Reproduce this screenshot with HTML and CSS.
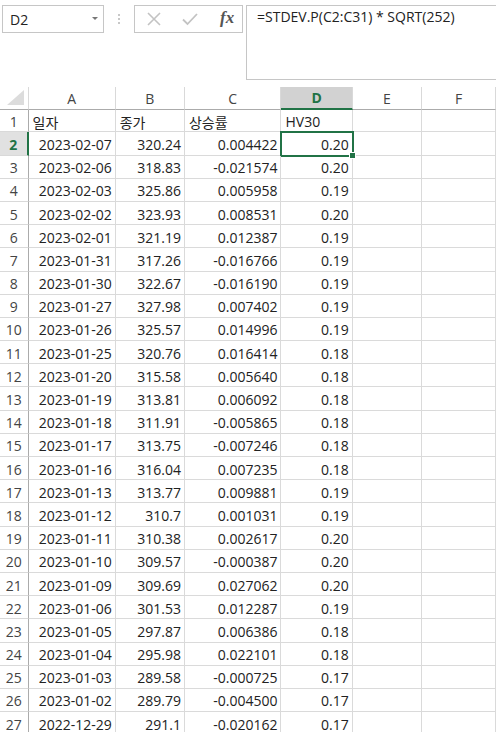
FILE: index.html
```html
<!DOCTYPE html>
<html>
<head>
<meta charset="utf-8">
<link rel="stylesheet" href="styles.css">
</head>
<body>
<div class="app">
  <div class="formula-area">
    <div class="namebox"><span class="name">D2</span><span class="caret"></span></div>
    <div class="dots"><i></i><i></i><i></i></div>
    <div class="fxbox">
      <svg class="ico-x" width="14" height="14" viewBox="0 0 14 14"><path d="M1 1 L13 13 M13 1 L1 13" stroke="#c3c3c3" stroke-width="1.6" fill="none"/></svg>
      <svg class="ico-check" width="16" height="14" viewBox="0 0 16 14"><path d="M1 7.5 L5.5 12 L15 2" stroke="#c3c3c3" stroke-width="1.8" fill="none"/></svg>
      <span class="fx">fx</span>
    </div>
    <div class="formula">=STDEV.P(C2:C31) * SQRT(252)</div>
  </div>
  <div class="sheet" id="sheet">
    <div class="corner"><svg width="18" height="16" viewBox="0 0 18 16"><polygon points="17,0 17,15 0,15" fill="#dcdcdc"/></svg></div>
    <div class="colhead">A</div>
    <div class="colhead">B</div>
    <div class="colhead">C</div>
    <div class="colhead sel">D</div>
    <div class="colhead">E</div>
    <div class="colhead">F</div>
  </div>
</div>
<script src="app.js"></script>
</body>
</html>
```

FILE: app.js
```javascript
const rows = [
  ["일자","종가","상승률","HV30"],
  ["2023-02-07","320.24","0.004422","0.20"],
  ["2023-02-06","318.83","-0.021574","0.20"],
  ["2023-02-03","325.86","0.005958","0.19"],
  ["2023-02-02","323.93","0.008531","0.20"],
  ["2023-02-01","321.19","0.012387","0.19"],
  ["2023-01-31","317.26","-0.016766","0.19"],
  ["2023-01-30","322.67","-0.016190","0.19"],
  ["2023-01-27","327.98","0.007402","0.19"],
  ["2023-01-26","325.57","0.014996","0.19"],
  ["2023-01-25","320.76","0.016414","0.18"],
  ["2023-01-20","315.58","0.005640","0.18"],
  ["2023-01-19","313.81","0.006092","0.18"],
  ["2023-01-18","311.91","-0.005865","0.18"],
  ["2023-01-17","313.75","-0.007246","0.18"],
  ["2023-01-16","316.04","0.007235","0.18"],
  ["2023-01-13","313.77","0.009881","0.19"],
  ["2023-01-12","310.7","0.001031","0.19"],
  ["2023-01-11","310.38","0.002617","0.20"],
  ["2023-01-10","309.57","-0.000387","0.20"],
  ["2023-01-09","309.69","0.027062","0.20"],
  ["2023-01-06","301.53","0.012287","0.19"],
  ["2023-01-05","297.87","0.006386","0.18"],
  ["2023-01-04","295.98","0.022101","0.18"],
  ["2023-01-03","289.58","-0.000725","0.17"],
  ["2023-01-02","289.79","-0.004500","0.17"],
  ["2022-12-29","291.1","-0.020162","0.17"]
];
const sheet = document.getElementById('sheet');
rows.forEach((r, i) => {
  const n = i + 1;
  const rh = document.createElement('div');
  rh.className = 'rowhead' + (n === 2 ? ' sel' : '');
  rh.textContent = n;
  sheet.appendChild(rh);
  for (let c = 0; c < 6; c++) {
    const d = document.createElement('div');
    let cls = 'cell';
    const v = r[c] || '';
    if (n > 1 && c < 4) cls += ' num';
    if (n === 2 && c === 3) cls += ' active';
    d.className = cls;
    d.textContent = v;
    if (n === 2 && c === 3) {
      const h = document.createElement('span');
      h.className = 'handle';
      d.appendChild(h);
    }
    sheet.appendChild(d);
  }
});
```

FILE: styles.css
```css
html, body {
  margin: 0;
  padding: 0;
  background: #fff;
}
body {
  width: 496px;
  height: 732px;
  overflow: hidden;
  font-family: "Open Sans", "Noto Sans CJK KR", sans-serif;
  color: #222;
}
.app {
  width: 496px;
  height: 732px;
  overflow: hidden;
}
.formula-area {
  height: 87px;
  display: flex;
  align-items: flex-start;
  padding-top: 5px;
  box-sizing: border-box;
}
.namebox {
  margin-left: 2px;
  width: 102px;
  height: 28px;
  border: 1px solid #c6c6c6;
  box-sizing: border-box;
  display: flex;
  align-items: center;
  justify-content: space-between;
  padding: 0 5px 0 7px;
  font-size: 14px;
  color: #222;
}
.caret {
  width: 0;
  height: 0;
  border-left: 3px solid transparent;
  border-right: 3px solid transparent;
  border-top: 3px solid #777;
  margin-top: -2px;
}
.dots {
  width: 30px;
  height: 28px;
  display: flex;
  flex-direction: column;
  align-items: center;
  justify-content: center;
  gap: 2px;
}
.dots i {
  width: 2px;
  height: 2px;
  background: #c8c8c8;
}
.fxbox {
  width: 109px;
  height: 28px;
  border: 1px solid #c6c6c6;
  box-sizing: border-box;
  display: flex;
  align-items: center;
  padding-left: 12px;
}
.ico-x { margin-right: 21px; }
.ico-check { margin-right: 22px; }
.fx {
  font-family: "Liberation Serif", serif;
  font-style: italic;
  font-weight: 700;
  font-size: 17px;
  color: #555;
  margin-top: -2px;
}
.formula {
  margin-left: 3px;
  flex: 1;
  height: 75px;
  border: 1px solid #c6c6c6;
  border-right: none;
  box-sizing: border-box;
  padding: 1px 0 0 10px;
  font-size: 14px;
  line-height: 20px;
  color: #222;
  white-space: nowrap;
}
.sheet {
  display: grid;
  grid-template-columns: 28.5px 87.2px 69.3px 96.5px 71.2px 69.6px 73.7px;
  grid-template-rows: 23px 22.4px;
  grid-auto-rows: 23.2px;
}
.corner {
  border-right: 1px solid #d9d9d9;
  border-bottom: 1px solid #ababab;
  box-sizing: border-box;
  display: flex;
  align-items: flex-end;
  justify-content: flex-end;
  padding: 0 3px 3px 0;
}
.corner svg { display: block; }
.colhead {
  border-right: 1px solid #d9d9d9;
  border-bottom: 1px solid #ababab;
  box-sizing: border-box;
  display: flex;
  align-items: center;
  justify-content: center;
  font-size: 14px;
  color: #444;
}
.colhead.sel {
  background: #d2d2d2;
  color: #217346;
  font-weight: 700;
  border-bottom: 2px solid #217346;
}
.rowhead {
  border-right: 1px solid #ababab;
  border-bottom: 1px solid #d9d9d9;
  box-sizing: border-box;
  display: flex;
  align-items: center;
  justify-content: center;
  font-size: 14px;
  color: #444;
  padding-top: 2px;
}
.rowhead.sel {
  background: #e1e1e1;
  color: #217346;
  font-weight: 700;
  border-right: 2px solid #217346;
}
.cell {
  position: relative;
  border-right: 1px solid #dadada;
  border-bottom: 1px solid #dadada;
  box-sizing: border-box;
  display: flex;
  align-items: center;
  padding: 2px 3px 0 4px;
  font-size: 14px;
  color: #222;
  white-space: nowrap;
  overflow: hidden;
}
.cell.num {
  justify-content: flex-end;
}
.cell.active {
  overflow: visible;
  outline: 2px solid #217346;
  outline-offset: -1px;
}
.handle {
  position: absolute;
  right: -4px;
  bottom: -4px;
  width: 5px;
  height: 5px;
  background: #217346;
  border: 1px solid #fff;
  z-index: 2;
}
```
